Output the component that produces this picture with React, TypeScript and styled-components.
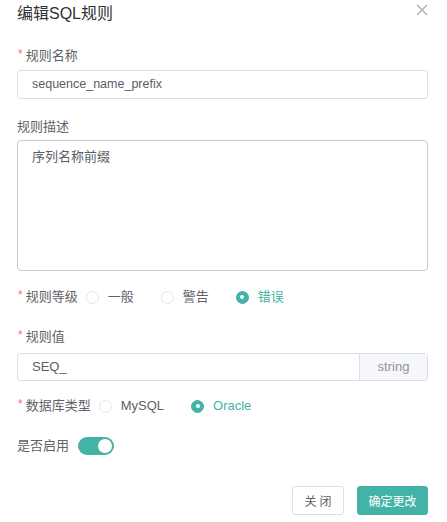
import React, { useState } from "react";
import styled, { createGlobalStyle } from "styled-components";

const TEAL = "#44b3a7";

const Global = createGlobalStyle`
  html, body { margin: 0; padding: 0; background: #fff; }
  body { font-family: "Liberation Sans", "Noto Sans CJK SC", sans-serif; color: #606266; }
  * { box-sizing: border-box; }
`;

const Dialog = styled.div`
  width: 447px;
  height: 522px;
  padding: 0 19px 0 17px;
  display: flex;
  flex-direction: column;
`;

const Header = styled.div`
  display: flex;
  justify-content: space-between;
  align-items: flex-start;
  height: 28px;
`;

const Title = styled.div`
  font-size: 16px;
  line-height: 28px;
  color: #303133;
`;

const Close = styled.span`
  margin-top: 4px;
  width: 12px;
  height: 12px;
  display: flex;
`;

const Item = styled.div<{ $mt: number }>`
  margin-top: ${(p) => p.$mt}px;
  display: flex;
  flex-direction: column;
`;

const Row = styled.div<{ $mt: number }>`
  margin-top: ${(p) => p.$mt}px;
  display: flex;
  align-items: center;
  height: 20px;
`;

const Label = styled.label<{ $gap?: number }>`
  font-size: 13px;
  line-height: 20px;
  color: #606266;
  white-space: nowrap;
  margin-bottom: ${(p) => p.$gap ?? 0}px;
  display: flex;
  align-items: center;
`;

const Star = styled.span`
  color: #f56c6c;
  font-size: 12px;
  margin-right: 3px;
  margin-left: 1px;
  position: relative;
  top: -2px;
`;

const Input = styled.div`
  height: 29px;
  border: 1px solid #dcdfe6;
  border-radius: 3px;
  padding: 0 14px;
  font-size: 12.5px;
  line-height: 27px;
  color: #5a5e66;
`;

const TextArea = styled.div`
  height: 131px;
  border: 1px solid #c8cbd1;
  border-radius: 4px;
  padding: 6px 14px;
  font-size: 13px;
  line-height: 20px;
  color: #5a5e66;
`;

const Group = styled.div`
  display: flex;
  height: 28px;
  border: 1px solid #dcdfe6;
  border-radius: 3px;
  overflow: hidden;
`;

const GroupInput = styled.div`
  flex: 1;
  padding: 0 14px;
  font-size: 13px;
  line-height: 26px;
  color: #5a5e66;
`;

const Addon = styled.div`
  width: 68px;
  border-left: 1px solid #dcdfe6;
  background: #f5f7fa;
  color: #909399;
  font-size: 13px;
  line-height: 26px;
  text-align: center;
`;

const Radio = styled.span<{ $first?: boolean }>`
  display: flex;
  align-items: center;
  margin-left: ${(p) => (p.$first ? 8 : 27)}px;
  font-size: 13px;
  line-height: 20px;
  cursor: pointer;
`;

const Dot = styled.span<{ $on: boolean }>`
  width: 13px;
  height: 13px;
  border-radius: 50%;
  border: 1px solid ${(p) => (p.$on ? TEAL : "#e2e4e8")};
  background: ${(p) => (p.$on ? TEAL : "#fff")};
  display: flex;
  align-items: center;
  justify-content: center;
  margin-right: 9px;
  &::after {
    content: "";
    width: 4px;
    height: 4px;
    border-radius: 50%;
    background: #fff;
    display: ${(p) => (p.$on ? "block" : "none")};
  }
`;

const RadioText = styled.span<{ $on: boolean }>`
  color: ${(p) => (p.$on ? TEAL : "#606266")};
`;

const Switch = styled.span<{ $on: boolean }>`
  margin-left: 9px;
  width: 36px;
  height: 18px;
  border-radius: 9px;
  background: ${(p) => (p.$on ? TEAL : "#dcdfe6")};
  display: flex;
  align-items: center;
  justify-content: ${(p) => (p.$on ? "flex-end" : "flex-start")};
  padding: 0 2px;
  &::after {
    content: "";
    width: 14px;
    height: 14px;
    border-radius: 50%;
    background: #fff;
  }
`;

const Footer = styled.div`
  margin-top: 30px;
  display: flex;
  justify-content: flex-end;
  gap: 13px;
`;

const Button = styled.button<{ $primary?: boolean }>`
  width: ${(p) => (p.$primary ? 71 : 52)}px;
  height: 29px;
  padding: 0;
  border-radius: 3px;
  font-family: inherit;
  font-size: 12px;
  text-align: center;
  border: 1px solid ${(p) => (p.$primary ? TEAL : "#dcdfe6")};
  background: ${(p) => (p.$primary ? TEAL : "#fff")};
  color: ${(p) => (p.$primary ? "#fff" : "#606266")};
`;

const Spaced = styled.span`
  letter-spacing: 3px;
  margin-right: -3px;
`;

export default function App() {
  const [level, setLevel] = useState("错误");
  const [db, setDb] = useState("Oracle");
  const [on, setOn] = useState(true);
  return (
    <Dialog>
      <Global />
      <Header>
        <Title>编辑SQL规则</Title>
        <Close>
          <svg width="12" height="12" viewBox="0 0 12 12">
            <path d="M1 1L11 11M11 1L1 11" stroke="#a6a9ad" strokeWidth="1.2" />
          </svg>
        </Close>
      </Header>

      <Item $mt={18}>
        <Label $gap={4}>
          <Star>*</Star>规则名称
        </Label>
        <Input>sequence_name_prefix</Input>
      </Item>

      <Item $mt={18}>
        <Label $gap={3}>规则描述</Label>
        <TextArea>序列名称前缀</TextArea>
      </Item>

      <Row $mt={16}>
        <Label>
          <Star>*</Star>规则等级
        </Label>
        {["一般", "警告", "错误"].map((v, i) => (
          <Radio key={v} $first={i === 0} onClick={() => setLevel(v)}>
            <Dot $on={level === v} />
            <RadioText $on={level === v}>{v}</RadioText>
          </Radio>
        ))}
      </Row>

      <Item $mt={20}>
        <Label $gap={6}>
          <Star>*</Star>规则值
        </Label>
        <Group>
          <GroupInput>SEQ_</GroupInput>
          <Addon>string</Addon>
        </Group>
      </Item>

      <Row $mt={15}>
        <Label>
          <Star>*</Star>数据库类型
        </Label>
        {["MySQL", "Oracle"].map((v, i) => (
          <Radio key={v} $first={i === 0} onClick={() => setDb(v)}>
            <Dot $on={db === v} />
            <RadioText $on={db === v}>{v}</RadioText>
          </Radio>
        ))}
      </Row>

      <Row $mt={20}>
        <Label>是否启用</Label>
        <Switch $on={on} onClick={() => setOn(!on)} />
      </Row>

      <Footer>
        <Button>
          <Spaced>关闭</Spaced>
        </Button>
        <Button $primary>确定更改</Button>
      </Footer>
    </Dialog>
  );
}
